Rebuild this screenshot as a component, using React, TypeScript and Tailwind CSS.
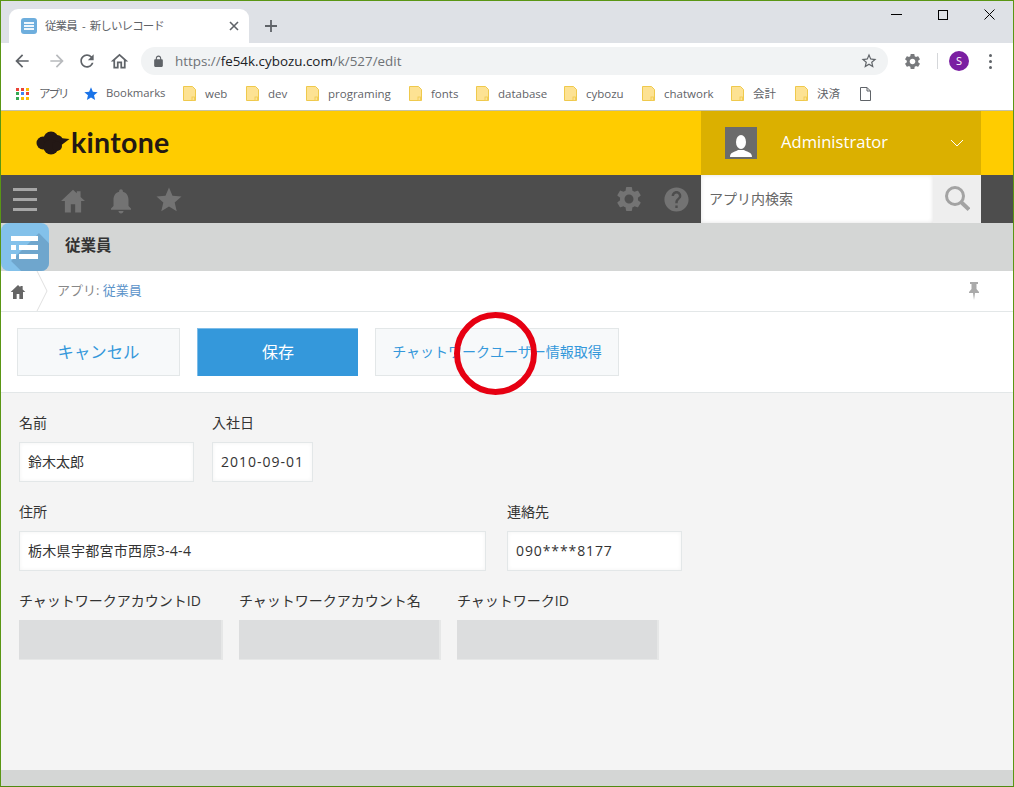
import React from "react";

const cjk = "font-['Open_Sans','Noto_Sans_CJK_JP',sans-serif]";

const P = {
  back: "M20 11H7.830l5.590-5.590L12 4l-8 8 8 8 1.410-1.410L7.830 13H20v-2z",
  reload: "M17.65 6.35C16.2 4.9 14.21 4 12 4c-4.42 0-7.99 3.58-7.99 8s3.57 8 7.99 8c3.73 0 6.84-2.55 7.73-6h-2.08c-.82 2.33-3.04 4-5.65 4-3.31 0-6-2.69-6-6s2.69-6 6-6c1.66 0 3.14.69 4.22 1.78L13 11h7V4l-2.35 2.35z",
  homeO: "M12 5.69l5 4.5V18h-2v-6H9v6H7v-7.81l5-4.5M12 3L2 12h3v8h6v-6h2v6h6v-8h3L12 3z",
  house: "M12 1.500L1 12h3.500v10.500h5.500V15h4v7.500h5.500V12H23l-4-3.800V3h-3.500v1.900z",
  star: "M12 17.27L18.18 21l-1.64-7.03L22 9.24l-7.19-.61L12 2 9.19 8.63 2 9.24l5.46 4.73L5.82 21z",
  starO: "M22 9.24l-7.19-.62L12 2 9.19 8.63 2 9.24l5.46 4.73L5.82 21 12 17.27 18.18 21l-1.63-7.03L22 9.24zM12 15.4l-3.76 2.27 1-4.28-3.32-2.88 4.38-.38L12 6.1l1.71 4.04 4.38.38-3.32 2.88 1 4.28L12 15.4z",
  lock: "M18 8h-1V6c0-2.76-2.24-5-5-5S7 3.24 7 6v2H6c-1.1 0-2 .9-2 2v10c0 1.1.9 2 2 2h12c1.1 0 2-.9 2-2V10c0-1.1-.9-2-2-2zM9 8V6c0-1.66 1.34-3 3-3s3 1.34 3 3v2H9z",
  bell: "M12 22c1.1 0 2-.9 2-2h-4c0 1.1.89 2 2 2zm6-6v-5c0-3.07-1.64-5.64-4.5-6.32V4c0-.83-.67-1.5-1.5-1.5s-1.5.67-1.5 1.5v.68C7.63 5.36 6 7.92 6 11v5l-2 2v1h16v-1l-2-2z",
  gear: "M19.14 12.94c.04-.3.06-.61.06-.94 0-.32-.02-.64-.07-.94l2.03-1.58c.18-.14.23-.41.12-.61l-1.92-3.32c-.12-.22-.37-.29-.59-.22l-2.39.96c-.5-.38-1.03-.7-1.62-.94l-.36-2.54c-.04-.24-.24-.41-.48-.41h-3.84c-.24 0-.43.17-.47.41l-.36 2.54c-.59.24-1.13.57-1.62.94l-2.39-.96c-.22-.08-.47 0-.59.22L2.74 8.87c-.12.21-.08.47.12.61l2.03 1.58c-.05.3-.09.63-.09.94s.02.64.07.94l-2.03 1.58c-.18.14-.23.41-.12.61l1.92 3.32c.12.22.37.29.59.22l2.39-.96c.5.38 1.03.7 1.62.94l.36 2.54c.05.24.24.41.48.41h3.84c.24 0 .44-.17.47-.41l.36-2.54c.59-.24 1.13-.56 1.62-.94l2.39.96c.22.08.47 0 .59-.22l1.92-3.32c.12-.22.07-.47-.12-.61l-2.01-1.58zM12 15.6c-1.98 0-3.6-1.62-3.6-3.6s1.62-3.6 3.6-3.6 3.6 1.62 3.6 3.6-1.62 3.6-3.6 3.6z",
  help: "M12 2C6.48 2 2 6.48 2 12s4.48 10 10 10 10-4.48 10-10S17.52 2 12 2zm1 17h-2v-2h2v2zm2.07-7.75l-.9.92C13.45 12.9 13 13.5 13 15h-2v-.5c0-1.1.45-2.1 1.17-2.83l1.24-1.26c.37-.36.59-.86.59-1.41 0-1.1-.9-2-2-2s-2 .9-2 2H8c0-2.21 1.79-4 4-4s4 1.79 4 4c0 .88-.36 1.68-.93 2.25z",
};

function I({ d, size, color, className }: { d: string; size: number; color: string; className?: string }) {
  return (
    <svg width={size} height={size} viewBox="0 0 24 24" fill={color} className={"shrink-0 " + (className ?? "")}>
      <path d={d} />
    </svg>
  );
}

function Folder() {
  return (
    <svg width="13" height="15" viewBox="0 0 13 15" className="shrink-0">
      <path d="M.5.5h9l3 3v11H.5z" fill="#fde293" stroke="#efc94c" />
      <rect x="9" y="11" width="2.500" height="3.500" fill="#fde293" stroke="#efc94c" strokeWidth="0.8" />
    </svg>
  );
}

function Mark({ name, w }: { name: string; w: string }) {
  return (
    <div className={"flex items-center gap-[9px] shrink-0 " + w}>
      <Folder />
      <span className="text-[11.5px] text-[#5f6368] whitespace-nowrap">{name}</span>
    </div>
  );
}

function FormField({ label, value, w, track }: { label: string; value?: string; w: string; track?: string }) {
  return (
    <div className={"flex flex-col shrink-0 " + w}>
      <div className="h-5 mb-[9px] text-[14px] leading-5 text-[#333] whitespace-nowrap">{label}</div>
      {value !== undefined ? (
        <div className={"h-10 flex items-center px-2 pb-px bg-white border border-[#e3e7e8] shadow-[inset_0_0_4px_rgba(0,0,0,0.05)] text-[#333] text-[14px] whitespace-nowrap " + (track ?? "")}>
          {value}
        </div>
      ) : (
        <div className="h-10 bg-[#dcddde] border-r-2 border-b border-[#e6e7e7]" />
      )}
    </div>
  );
}

export default function App() {
  return (
    <div className={"w-[1014px] h-[787px] relative overflow-hidden border border-[#5a9614] border-b-[#4f8a10] bg-white flex flex-col " + cjk}>
      {/* tab strip */}
      <div className="h-[42px] shrink-0 bg-[#dee1e6] flex items-end pl-2 relative">
        <div className="w-[240px] h-[34px] bg-white rounded-t-[9px] flex items-center pl-3 pr-[10px]">
          <div className="w-4 h-4 rounded-[3px] bg-[#6eaedd] flex flex-col justify-center gap-[1px] px-[3px]">
            <div className="h-[2px] bg-white/90" />
            <div className="h-[2px] bg-white/90" />
            <div className="h-[2px] bg-white/90" />
          </div>
          <span className="ml-2 text-[11.5px] tracking-[-0.9px] [word-spacing:3px] text-[#5f6368] flex-1 whitespace-nowrap">従業員 - 新しいレコード</span>
          <svg width="10" height="10" viewBox="0 0 10 10" stroke="#5f6368" strokeWidth="1.6"><path d="M1 1l8 8M9 1l-8 8" /></svg>
        </div>
        <svg width="14" height="14" viewBox="0 0 14 14" stroke="#5f6368" strokeWidth="1.800" className="ml-[15px] mb-[10px]"><path d="M7 1v12M1 7h12" /></svg>
        <div className="ml-auto self-start flex items-center pt-2 pr-[18px] gap-[36px]">
          <div className="w-[11px] h-[11px] flex items-center"><div className="w-[11px] h-px bg-black" /></div>
          <div className="w-[10px] h-[10px] border border-black" />
          <svg width="11" height="11" viewBox="0 0 11 11" stroke="#000" strokeWidth="1"><path d="M.5.5l10 10M10.500.5l-10 10" /></svg>
        </div>
      </div>
      {/* toolbar */}
      <div className="h-[34px] shrink-0 flex items-center pl-[11px] pt-[2px] bg-white">
        <I d={P.back} size={20} color="#5f6368" />
        <I d={P.back} size={20} color="#b8babd" className="ml-[15px] rotate-180" />
        <I d={P.reload} size={20} color="#5f6368" className="ml-[10px]" />
        <I d={P.homeO} size={21} color="#5f6368" className="ml-3" />
        <div className="ml-[11px] w-[747px] h-7 rounded-full bg-[#f1f3f4] flex items-center pl-[11px] pr-[10px]">
          <I d={P.lock} size={13} color="#5f6368" />
          <span className="ml-[10px] flex-1 text-[13.4px] text-[#6e7276] whitespace-nowrap"><span>https://</span><span className="text-[#202124]">fe54k.cybozu.com</span>/k/527/edit</span>
          <I d={P.starO} size={18} color="#5f6368" />
        </div>
        <I d={P.gear} size={19} color="#77797c" className="ml-[15px]" />
        <div className="ml-[15px] w-px h-4 bg-[#d5d7da]" />
        <div className="ml-[11px] w-5 h-5 rounded-full bg-[#7b1fa2] text-white text-[11px] flex items-center justify-center">S</div>
        <div className="ml-5 flex flex-col gap-[3px]">
          <div className="w-[3px] h-[3px] rounded-full bg-[#5f6368]" />
          <div className="w-[3px] h-[3px] rounded-full bg-[#5f6368]" />
          <div className="w-[3px] h-[3px] rounded-full bg-[#5f6368]" />
        </div>
      </div>
      {/* bookmarks */}
      <div className="h-[33px] shrink-0 flex items-center pl-[15px] bg-white">
        <div className="w-[68px] flex items-center shrink-0">
          <div className="grid grid-cols-3 gap-[1.500px] w-[13px]">
            {["#ea4335","#ea4335","#fbbc05","#34a853","#4285f4","#ea4335","#34a853","#fbbc05","#fbbc05"].map((c, i) => (
              <div key={i} className="w-[3px] h-[3px]" style={{ background: c }} />
            ))}
          </div>
          <span className="ml-[10px] text-[11.5px] tracking-[-2px] text-[#5f6368] whitespace-nowrap">アプリ</span>
        </div>
        <div className="w-[99px] flex items-center shrink-0 gap-[7px]">
          <I d={P.star} size={16} color="#1a73e8" className="-ml-[1px]" />
          <span className="text-[11.3px] text-[#5f6368]">Bookmarks</span>
        </div>
        <Mark name="web" w="w-[63px]" />
        <Mark name="dev" w="w-[60px]" />
        <Mark name="programing" w="w-[103px]" />
        <Mark name="fonts" w="w-[67px]" />
        <Mark name="database" w="w-[88px]" />
        <Mark name="cybozu" w="w-[78px]" />
        <Mark name="chatwork" w="w-[89px]" />
        <Mark name="会計" w="w-[64px]" />
        <Mark name="決済" w="w-[65px]" />
        <svg width="11" height="14" viewBox="0 0 11 14" fill="none" stroke="#5f6368"><path d="M.5.5h6.500l3.500 3.500v9.500h-10zM7 .5v3.500h3.500" /></svg>
      </div>
      <div className="h-px shrink-0 bg-[#c4c2a8]" />
      {/* kintone header */}
      <div className="h-16 shrink-0 bg-[#ffcc00] flex items-stretch">
        <div className="w-[700px] flex items-center pl-[35px] pb-[1px]">
          <svg width="34" height="24" viewBox="0 0 34 24" fill="#231815">
            <circle cx="7" cy="12" r="6.500" /><circle cx="15" cy="8" r="7.500" /><circle cx="21" cy="10" r="6" />
            <circle cx="15" cy="16" r="7.500" /><circle cx="21" cy="15" r="5" /><path d="M24 7l9.500 1-8 6z" />
          </svg>
          <span className="ml-[1px] text-[28.5px] leading-none font-bold text-[#231815] font-['Lato',sans-serif] tracking-[0.3px]">kintone</span>
        </div>
        <div className="w-[280px] bg-[#dbb000] flex items-center pl-6">
          <div className="w-8 h-8 bg-[#6b6b6b] flex items-end justify-center overflow-hidden">
            <svg width="24" height="26" viewBox="0 0 24 26" fill="#fff"><ellipse cx="12" cy="9" rx="5" ry="7" /><path d="M1 24c0-5 5-5 8-7h6c3 2 8 2 8 7z" /></svg>
          </div>
          <span className="ml-6 mb-[2px] text-[16.6px] text-white flex-1 whitespace-nowrap">Administrator</span>
          <svg width="14" height="8" viewBox="0 0 14 8" fill="none" stroke="#fff" className="mr-[17px]"><path d="M1 1l6 6 6-6" /></svg>
        </div>
      </div>
      {/* nav */}
      <div className="h-12 shrink-0 bg-[#4d4d4d] flex items-center">
        <div className="ml-3 w-6 flex flex-col gap-[7px]">
          <div className="h-[3px] bg-[#a6a6a6]" /><div className="h-[3px] bg-[#a6a6a6]" /><div className="h-[3px] bg-[#a6a6a6]" />
        </div>
        <I d={P.house} size={26} color="#737373" className="ml-[23px] mt-[3px]" />
        <I d={P.bell} size={30} color="#737373" className="ml-[20px] mt-[3px]" />
        <I d={P.star} size={30} color="#737373" className="ml-[18px] mt-[1px]" />
        <I d={P.gear} size={30} color="#737373" className="ml-[430px]" />
        <I d={P.help} size={29} color="#737373" className="ml-[18px]" />
        <div className="ml-[10px] w-[232px] h-12 bg-white flex items-center pl-2 pb-[2px] text-[14px] text-[#666] shadow-[inset_0_0_4px_rgba(0,0,0,0.12)]">アプリ内検索</div>
        <div className="w-12 h-12 bg-[#eeeeee] flex items-center justify-center pb-[2px] pr-[1px]">
          <svg width="26" height="26" viewBox="0 0 26 26" fill="none" stroke="#a3a3a3"><circle cx="11" cy="11" r="8.500" strokeWidth="3" /><path d="M17 17l8 7.500" strokeWidth="4" /></svg>
        </div>
      </div>
      {/* app bar */}
      <div className="h-12 shrink-0 bg-[#d4d6d5] flex items-center">
        <div className="w-12 h-12 rounded-lg bg-[#83c1ea] relative overflow-hidden flex flex-col justify-center gap-[4px] pl-[10px] pr-[11px]">
          <div className="absolute inset-0 bg-[#6fa6cd] [clip-path:polygon(79%_21%,100%_42%,100%_100%,42%_100%,21%_79%)]" />
          <div className="relative h-[5px] bg-white" />
          <div className="relative h-[5px] flex gap-[3px]"><div className="w-[5px] bg-white" /><div className="flex-1 bg-white" /></div>
          <div className="relative h-[5px] flex gap-[3px]"><div className="w-[5px] bg-white" /><div className="flex-1 bg-white" /></div>
        </div>
        <span className="ml-4 mb-[3px] text-[15.5px] font-bold text-[#333]">従業員</span>
      </div>
      {/* breadcrumb */}
      <div className="h-10 shrink-0 bg-white flex items-center">
        <I d={P.house} size={16} color="#666" className="ml-[9px] mt-[1px]" />
        <svg width="12" height="40" viewBox="0 0 12 40" fill="none" stroke="#e0e0e0" className="ml-[10px]"><path d="M1 0l10 20L1 40" /></svg>
        <span className="ml-[9px] text-[13px] text-[#888]">アプリ: <span className="text-[#5b93c9]">従業員</span></span>
        <svg width="12" height="18" viewBox="0 0 12 18" fill="#aaa" className="ml-auto mr-[33px]"><path d="M2 0h8v2H8.500v5L11 10v1H7l-1 7-1-7H1v-1l2.500-3V2H2z" /></svg>
      </div>
      {/* actions */}
      <div className="h-[82px] shrink-0 bg-white border-y border-[#e3e7e8] flex items-center pl-4 relative">
        <div className="w-[163px] h-12 bg-[#f7f9fa] border border-[#e3e7e8] flex items-center justify-center text-[16.4px] text-[#3498db]">キャンセル</div>
        <div className="ml-[17px] w-[161px] h-12 bg-[#3498db] border-l border-t border-[#7dbce8] flex items-center justify-center pb-[2px] text-[16px] text-white">保存</div>
        <div className="ml-[17px] w-[244px] h-12 bg-[#f7f9fa] border border-[#e3e7e8] flex items-center justify-center pb-[2px] text-[14px] text-[#3498db] whitespace-nowrap">チャットワークユーザー情報取得</div>
        <div className="absolute left-[453px] top-0 w-[83px] h-[83px] rounded-full border-[6px] border-[#e60012]" />
      </div>
      {/* form */}
      <div className="flex-1 bg-[#f4f4f4] px-[18px] pt-5 flex flex-col gap-5">
        <div className="flex">
          <FormField label="名前" value="鈴木太郎" w="w-[175px]" />
          <FormField label="入社日" value="2010-09-01" w="w-[101px] ml-[18px]" track="tracking-[1px]" />
        </div>
        <div className="flex">
          <FormField label="住所" value="栃木県宇都宮市西原3-4-4" w="w-[467px]" track="tracking-[0.3px]" />
          <FormField label="連絡先" value="090****8177" w="w-[175px] ml-[21px]" track="tracking-[0.9px]" />
        </div>
        <div className="flex">
          <FormField label="チャットワークアカウントID" w="w-[204px]" />
          <FormField label="チャットワークアカウント名" w="w-[202px] ml-4" />
          <FormField label="チャットワークID" w="w-[202px] ml-4" />
        </div>
      </div>
      <div className="h-4 shrink-0 bg-[#d4d6d5]" />
    </div>
  );
}
